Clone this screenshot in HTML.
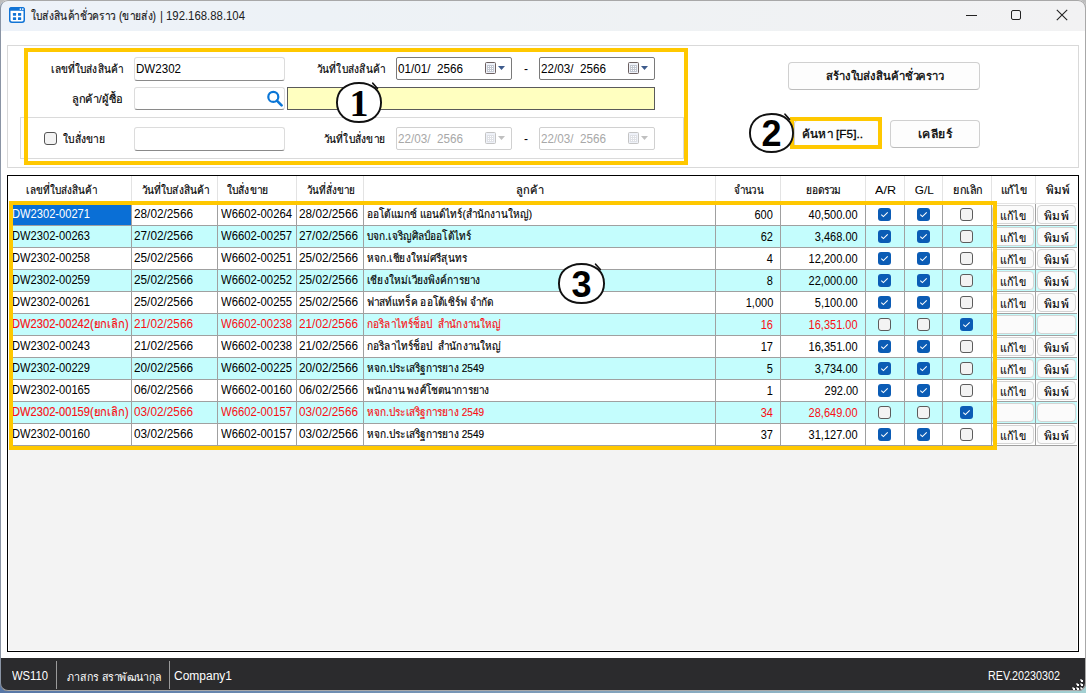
<!DOCTYPE html><html><head><meta charset="utf-8"><style>
*{margin:0;padding:0;box-sizing:border-box}
html,body{width:1086px;height:693px;overflow:hidden;background:linear-gradient(180deg,#bdbdbd 0,#bdbdbd 20px,transparent 20px),linear-gradient(90deg,#5877a6 0%,#7d9bb8 50%,#a3d0d2 100%)}
body{font-family:"Liberation Sans",sans-serif;position:relative;color:#000}
.abs{position:absolute}
svg{display:block}
#win{position:absolute;left:0;top:0;width:1086px;height:691px;background:#fff;border-radius:8px;overflow:hidden}
#frame{position:absolute;left:0;top:0;width:1086px;height:691px;border:1px solid #a8a8a8;border-left-color:#8a94a4;border-radius:8px}
#title{position:absolute;left:0;top:0;width:1086px;height:31px;background:linear-gradient(90deg,#edf2f9 0%,#edf2f6 30%,#eff2f4 60%,#f2f2f3 100%)}
.t{position:absolute;white-space:pre;line-height:16px;height:16px;-webkit-text-stroke:0.15px currentColor}
.inp{position:absolute;background:#fff;border:1px solid #dcdcdc;border-bottom:1px solid #8a8a8a;border-radius:3px}
.date{position:absolute;background:#fff;border:1px solid #7a7a7a;border-radius:2px}
.date.dis{border-color:#d0d0d0}
.date .cal{position:absolute;left:88px;top:4px}
.btn{position:absolute;background:#fdfdfd;border:1px solid #d0d0d0;border-bottom-color:#bcbcbc;border-radius:4px}
.yb{position:absolute;border:4px solid #ffc800}
.circ{position:absolute}
.hl{position:absolute;background:#e3e3e3}
.gl{position:absolute;background:#a0a0a0}
.cb{position:absolute;width:13px;height:13px}
.gb{position:absolute;height:19px;background:#fbfbfb;border:1px solid #d4d4d4;border-radius:4px}
#status{position:absolute;left:0;top:658px;width:1086px;height:33px;background:#2b2b2d}
</style></head><body><div id="win">

<div id="title">
<svg class="abs" style="left:9px;top:7px" width="16" height="16" viewBox="0 0 16 16"><rect x="0.75" y="0.75" width="14.5" height="14.5" rx="2.2" fill="#fff" stroke="#1174d6" stroke-width="1.5"/><path d="M0 3 Q0 0 3 0 L13 0 Q16 0 16 3 L16 3.7 L0 3.7Z" fill="#1174d6"/><circle cx="11.4" cy="2.1" r="0.85" fill="#fff"/><circle cx="13.8" cy="2.1" r="0.85" fill="#fff"/><rect x="3.9" y="6" width="3.2" height="2.8" rx="0.5" fill="#1174d6"/><rect x="9" y="6" width="3.2" height="2.8" rx="0.5" fill="#1174d6"/><rect x="3.9" y="10.2" width="3.2" height="2.8" rx="0.5" fill="#1174d6"/><rect x="9" y="10.2" width="3.2" height="2.8" rx="0.5" fill="#1174d6"/></svg>
<div class="abs" style="left:966px;top:15px;width:11px;height:1px;background:#222"></div>
<div class="abs" style="left:1011px;top:10px;width:10px;height:10px;border:1px solid #222;border-radius:2px"></div>
<svg class="abs" style="left:1056px;top:9px" width="12" height="12" viewBox="0 0 12 12"><path d="M0.8 0.8 L11.2 11.2 M11.2 0.8 L0.8 11.2" stroke="#222" stroke-width="1.1"/></svg>
</div>

<div class="t" id="ttl" style="top:8.17px;font-size:12.5px;color:#1c1c1c;left:31px;transform-origin:0 50%;transform:scaleX(0.8180)">ใบส่งสินค้าชั่วคราว (ขายส่ง)</div>
<div class="t" id="ttl2" style="top:8.17px;font-size:12.5px;color:#1c1c1c;left:160px;transform-origin:0 50%;-webkit-text-stroke:0;transform:scaleX(0.9231)">|</div>
<div class="t" id="ttl3" style="top:8.17px;font-size:12.5px;color:#1c1c1c;left:166px;transform-origin:0 50%;-webkit-text-stroke:0;transform:scaleX(0.9092)">192.168.88.104</div>
<div class="abs" style="left:7px;top:45px;width:1072px;height:123px;border:1px solid #d9d9d9"></div>
<div class="abs" style="left:20px;top:117px;width:664px;height:42px;border:1px solid #dadada"></div>
<div class="inp" style="left:134px;top:57px;width:151px;height:24px"></div>
<div class="inp" style="left:134px;top:87px;width:151px;height:23px"></div>
<svg class="abs" style="left:266px;top:90px" width="17" height="17" viewBox="0 0 17 17"><circle cx="7.3" cy="6.9" r="5" fill="none" stroke="#0b76d6" stroke-width="2.2"/><path d="M10.9 10.6 L15.6 15.3" stroke="#0b76d6" stroke-width="2.6" stroke-linecap="round"/></svg>
<div class="abs" style="left:287px;top:87px;width:368px;height:23px;background:#ffffc0;border:1px solid #5a5a5a"></div>
<div class="date" style="left:396px;top:57px;width:116px;height:23px"><svg class="cal" width="22" height="14" viewBox="0 0 22 14"><rect x="0.5" y="0.5" width="10" height="11" rx="1" fill="#eef1f8" stroke="#6b5f5f"/><rect x="2" y="3" width="7" height="7" fill="#c3c8d2"/><g fill="#fff"><rect x="3" y="4" width="1" height="1"/><rect x="5" y="4" width="1" height="1"/><rect x="7" y="4" width="1" height="1"/><rect x="3" y="6" width="1" height="1"/><rect x="5" y="6" width="1" height="1"/><rect x="7" y="6" width="1" height="1"/><rect x="3" y="8" width="1" height="1"/><rect x="5" y="8" width="1" height="1"/><rect x="7" y="8" width="1" height="1"/></g><path d="M13 4 L20 4 L16.5 8Z" fill="#3d5b8c"/></svg></div>
<div class="date" style="left:539px;top:57px;width:116px;height:23px"><svg class="cal" width="22" height="14" viewBox="0 0 22 14"><rect x="0.5" y="0.5" width="10" height="11" rx="1" fill="#eef1f8" stroke="#6b5f5f"/><rect x="2" y="3" width="7" height="7" fill="#c3c8d2"/><g fill="#fff"><rect x="3" y="4" width="1" height="1"/><rect x="5" y="4" width="1" height="1"/><rect x="7" y="4" width="1" height="1"/><rect x="3" y="6" width="1" height="1"/><rect x="5" y="6" width="1" height="1"/><rect x="7" y="6" width="1" height="1"/><rect x="3" y="8" width="1" height="1"/><rect x="5" y="8" width="1" height="1"/><rect x="7" y="8" width="1" height="1"/></g><path d="M13 4 L20 4 L16.5 8Z" fill="#3d5b8c"/></svg></div>
<div class="abs" style="left:44px;top:132px;width:13px;height:13px;border:1px solid #555;border-radius:3px;background:#f3f3f3"></div>
<div class="inp" style="left:134px;top:127px;width:151px;height:24px"></div>
<div class="date dis" style="left:396px;top:127px;width:116px;height:23px"><svg class="cal" width="22" height="14" viewBox="0 0 22 14"><rect x="0.5" y="0.5" width="10" height="11" rx="1" fill="#eef1f8" stroke="#c4c4c4"/><rect x="2" y="3" width="7" height="7" fill="#dfe1e6"/><g fill="#fff"><rect x="3" y="4" width="1" height="1"/><rect x="5" y="4" width="1" height="1"/><rect x="7" y="4" width="1" height="1"/><rect x="3" y="6" width="1" height="1"/><rect x="5" y="6" width="1" height="1"/><rect x="7" y="6" width="1" height="1"/><rect x="3" y="8" width="1" height="1"/><rect x="5" y="8" width="1" height="1"/><rect x="7" y="8" width="1" height="1"/></g><path d="M13 4 L20 4 L16.5 8Z" fill="#c0c0c0"/></svg></div>
<div class="date dis" style="left:539px;top:127px;width:116px;height:23px"><svg class="cal" width="22" height="14" viewBox="0 0 22 14"><rect x="0.5" y="0.5" width="10" height="11" rx="1" fill="#eef1f8" stroke="#c4c4c4"/><rect x="2" y="3" width="7" height="7" fill="#dfe1e6"/><g fill="#fff"><rect x="3" y="4" width="1" height="1"/><rect x="5" y="4" width="1" height="1"/><rect x="7" y="4" width="1" height="1"/><rect x="3" y="6" width="1" height="1"/><rect x="5" y="6" width="1" height="1"/><rect x="7" y="6" width="1" height="1"/><rect x="3" y="8" width="1" height="1"/><rect x="5" y="8" width="1" height="1"/><rect x="7" y="8" width="1" height="1"/></g><path d="M13 4 L20 4 L16.5 8Z" fill="#c0c0c0"/></svg></div>
<div class="btn" style="left:788px;top:62px;width:192px;height:28px"></div>
<div class="btn" style="left:794px;top:120px;width:86px;height:28px"></div>
<div class="btn" style="left:890px;top:120px;width:90px;height:28px"></div>
<div class="t" id="lab1" style="top:61.02px;font-size:11.5px;left:51px;transform-origin:0 50%;transform:scaleX(0.8780)">เลขที่ใบส่งสินค้า</div>
<div class="t" id="lab2" style="top:91.02px;font-size:11.5px;left:72px;transform-origin:0 50%;transform:scaleX(0.9586)">ลูกค้า/ผู้ซื้อ</div>
<div class="t" id="inp1" style="top:60.67px;font-size:12.5px;left:136px;transform-origin:0 50%;-webkit-text-stroke:0;transform:scaleX(0.9252)">DW2302</div>
<div class="t" id="lab3" style="top:61.02px;font-size:11.5px;left:317px;transform-origin:0 50%;transform:scaleX(0.8831)">วันที่ใบส่งสินค้า</div>
<div class="t" id="d1" style="top:61.17px;font-size:12.5px;left:398px;transform-origin:0 50%;-webkit-text-stroke:0;transform:scaleX(0.9350)">01/01/  2566</div>
<div class="t" id="dash1" style="top:61.17px;font-size:12.5px;left:524px;transform-origin:0 50%;-webkit-text-stroke:0;transform:scaleX(0.9588)">-</div>
<div class="t" id="d2" style="top:61.17px;font-size:12.5px;left:541px;transform-origin:0 50%;-webkit-text-stroke:0;transform:scaleX(0.9350)">22/03/  2566</div>
<div class="t" id="lab4" style="top:131.02px;font-size:11.5px;left:63px;transform-origin:0 50%;transform:scaleX(0.8936)">ใบสั่งขาย</div>
<div class="t" id="lab5" style="top:131.02px;font-size:11.5px;left:324px;transform-origin:0 50%;transform:scaleX(0.8841)">วันที่ใบสั่งขาย</div>
<div class="t" id="d3" style="top:131.17px;font-size:12.5px;color:#a8a8a8;left:398px;transform-origin:0 50%;-webkit-text-stroke:0;transform:scaleX(0.9350)">22/03/  2566</div>
<div class="t" id="dash2" style="top:131.17px;font-size:12.5px;left:524px;transform-origin:0 50%;-webkit-text-stroke:0;transform:scaleX(0.9588)">-</div>
<div class="t" id="d4" style="top:131.17px;font-size:12.5px;color:#a8a8a8;left:541px;transform-origin:0 50%;-webkit-text-stroke:0;transform:scaleX(0.9350)">22/03/  2566</div>
<div class="t" id="b1" style="top:68.02px;font-size:11.5px;left:826px;transform-origin:0 50%;-webkit-text-stroke:0.28px #000;transform:scaleX(0.9833)">สร้างใบส่งสินค้าชั่วคราว</div>
<div class="t" id="b2" style="top:126.02px;font-size:11.5px;left:802px;transform-origin:0 50%;-webkit-text-stroke:0.28px #000;transform:scaleX(1.0268)">ค้นหา [F5]..</div>
<div class="t" id="b3" style="top:126.02px;font-size:11.5px;left:918px;transform-origin:0 50%;-webkit-text-stroke:0.28px #000;transform:scaleX(1.0625)">เคลียร์</div>
<div class="abs" style="left:7px;top:175px;width:1072px;height:477px;border:1px solid #000;background:#fff"></div>
<div class="abs" style="left:9px;top:177px;width:1068px;height:473px;background:#f3f3f3"></div>
<div class="abs" style="left:9px;top:176px;width:1068px;height:27px;background:#fff"></div>
<div class="hl" style="left:131px;top:176px;width:1px;height:27px"></div>
<div class="hl" style="left:217px;top:176px;width:1px;height:27px"></div>
<div class="hl" style="left:296px;top:176px;width:1px;height:27px"></div>
<div class="hl" style="left:363px;top:176px;width:1px;height:27px"></div>
<div class="hl" style="left:715px;top:176px;width:1px;height:27px"></div>
<div class="hl" style="left:780px;top:176px;width:1px;height:27px"></div>
<div class="hl" style="left:865px;top:176px;width:1px;height:27px"></div>
<div class="hl" style="left:904px;top:176px;width:1px;height:27px"></div>
<div class="hl" style="left:942px;top:176px;width:1px;height:27px"></div>
<div class="hl" style="left:991px;top:176px;width:1px;height:27px"></div>
<div class="hl" style="left:1035px;top:176px;width:1px;height:27px"></div>
<div class="hl" style="left:9px;top:203px;width:1068px;height:1px"></div>
<div class="t" style="top:181.52px;font-size:11.5px;left:-238.0px;width:600px;text-align:center;"><span id="h0" style="display:inline-block;transform:scaleX(0.8659)">เลขที่ใบส่งสินค้า</span></div>
<div class="t" style="top:181.52px;font-size:11.5px;left:-124.5px;width:600px;text-align:center;"><span id="h1" style="display:inline-block;transform:scaleX(0.8831)">วันที่ใบส่งสินค้า</span></div>
<div class="t" style="top:181.52px;font-size:11.5px;left:-52.5px;width:600px;text-align:center;"><span id="h2" style="display:inline-block;transform:scaleX(0.8936)">ใบสั่งขาย</span></div>
<div class="t" style="top:181.52px;font-size:11.5px;left:30.5px;width:600px;text-align:center;"><span id="h3" style="display:inline-block;transform:scaleX(0.8571)">วันที่สั่งขาย</span></div>
<div class="t" style="top:181.52px;font-size:11.5px;left:230.0px;width:600px;text-align:center;"><span id="h4" style="display:inline-block;transform:scaleX(0.9643)">ลูกค้า</span></div>
<div class="t" style="top:181.52px;font-size:11.5px;left:448.5px;width:600px;text-align:center;"><span id="h5" style="display:inline-block;transform:scaleX(0.8571)">จำนวน</span></div>
<div class="t" style="top:181.52px;font-size:11.5px;left:523.5px;width:600px;text-align:center;"><span id="h6" style="display:inline-block;transform:scaleX(0.8780)">ยอดรวม</span></div>
<div class="t" style="top:181.52px;font-size:11.5px;left:586.0px;width:600px;text-align:center;-webkit-text-stroke:0;"><span id="h7" style="display:inline-block;transform:scaleX(1.0954)">A/R</span></div>
<div class="t" style="top:181.52px;font-size:11.5px;left:624.0px;width:600px;text-align:center;-webkit-text-stroke:0;"><span id="h8" style="display:inline-block;transform:scaleX(1.0244)">G/L</span></div>
<div class="t" style="top:181.52px;font-size:11.5px;left:667.5px;width:600px;text-align:center;"><span id="h9" style="display:inline-block;transform:scaleX(0.9375)">ยกเลิก</span></div>
<div class="t" style="top:181.52px;font-size:11.5px;left:713.5px;width:600px;text-align:center;"><span id="h10" style="display:inline-block;transform:scaleX(0.9286)">แก้ไข</span></div>
<div class="t" style="top:181.52px;font-size:11.5px;left:757.5px;width:600px;text-align:center;"><span id="h11" style="display:inline-block;transform:scaleX(1.0000)">พิมพ์</span></div>
<div class="abs" style="left:9px;top:204px;width:1068px;height:21px;background:#fff"></div>
<div class="gl" style="left:9px;top:225px;width:1068px;height:1px"></div>
<div class="abs" style="left:9px;top:226px;width:1068px;height:21px;background:#c4fdfd"></div>
<div class="gl" style="left:9px;top:247px;width:1068px;height:1px"></div>
<div class="abs" style="left:9px;top:248px;width:1068px;height:21px;background:#fff"></div>
<div class="gl" style="left:9px;top:269px;width:1068px;height:1px"></div>
<div class="abs" style="left:9px;top:270px;width:1068px;height:21px;background:#c4fdfd"></div>
<div class="gl" style="left:9px;top:291px;width:1068px;height:1px"></div>
<div class="abs" style="left:9px;top:292px;width:1068px;height:21px;background:#fff"></div>
<div class="gl" style="left:9px;top:313px;width:1068px;height:1px"></div>
<div class="abs" style="left:9px;top:314px;width:1068px;height:21px;background:#c4fdfd"></div>
<div class="gl" style="left:9px;top:335px;width:1068px;height:1px"></div>
<div class="abs" style="left:9px;top:336px;width:1068px;height:21px;background:#fff"></div>
<div class="gl" style="left:9px;top:357px;width:1068px;height:1px"></div>
<div class="abs" style="left:9px;top:358px;width:1068px;height:21px;background:#c4fdfd"></div>
<div class="gl" style="left:9px;top:379px;width:1068px;height:1px"></div>
<div class="abs" style="left:9px;top:380px;width:1068px;height:21px;background:#fff"></div>
<div class="gl" style="left:9px;top:401px;width:1068px;height:1px"></div>
<div class="abs" style="left:9px;top:402px;width:1068px;height:21px;background:#c4fdfd"></div>
<div class="gl" style="left:9px;top:423px;width:1068px;height:1px"></div>
<div class="abs" style="left:9px;top:424px;width:1068px;height:21px;background:#fff"></div>
<div class="gl" style="left:9px;top:445px;width:1068px;height:1px"></div>
<div class="gl" style="left:131px;top:204px;width:1px;height:242px"></div>
<div class="gl" style="left:217px;top:204px;width:1px;height:242px"></div>
<div class="gl" style="left:296px;top:204px;width:1px;height:242px"></div>
<div class="gl" style="left:363px;top:204px;width:1px;height:242px"></div>
<div class="gl" style="left:715px;top:204px;width:1px;height:242px"></div>
<div class="gl" style="left:780px;top:204px;width:1px;height:242px"></div>
<div class="gl" style="left:865px;top:204px;width:1px;height:242px"></div>
<div class="gl" style="left:904px;top:204px;width:1px;height:242px"></div>
<div class="gl" style="left:942px;top:204px;width:1px;height:242px"></div>
<div class="gl" style="left:991px;top:204px;width:1px;height:242px"></div>
<div class="gl" style="left:1035px;top:204px;width:1px;height:242px"></div>
<div class="abs" style="left:9px;top:204px;width:122px;height:21px;background:#0a6fd6"></div>
<div class="t" id="r0c0" style="top:205.67px;font-size:12.5px;color:#fff;left:12px;transform-origin:0 50%;-webkit-text-stroke:0;transform:scaleX(0.8908)">DW2302-00271</div>
<div class="t" id="r0c1" style="top:205.67px;font-size:12.5px;color:#000;left:134px;transform-origin:0 50%;-webkit-text-stroke:0;transform:scaleX(0.9431)">28/02/2566</div>
<div class="t" id="r0c2" style="top:205.67px;font-size:12.5px;color:#000;left:221px;transform-origin:0 50%;-webkit-text-stroke:0;transform:scaleX(0.9041)">W6602-00264</div>
<div class="t" id="r0c3" style="top:205.67px;font-size:12.5px;color:#000;left:299px;transform-origin:0 50%;-webkit-text-stroke:0;transform:scaleX(0.9431)">28/02/2566</div>
<div class="t" id="r0c4" style="top:206.02px;font-size:11.5px;color:#000;left:367px;transform-origin:0 50%;transform:scaleX(0.8737)">ออโต้แมกซ์ แอนด์ไทร์(สำนักงานใหญ่)</div>
<div class="t" id="r0c5" style="top:206.67px;font-size:12.5px;color:#000;right:313px;transform-origin:100% 50%;-webkit-text-stroke:0;transform:scaleX(0.8811)">600</div>
<div class="t" id="r0c6" style="top:206.67px;font-size:12.5px;color:#000;right:228px;transform-origin:100% 50%;-webkit-text-stroke:0;transform:scaleX(0.8811)">40,500.00</div>
<div class="cb" style="left:878px;top:208px"><svg width="13" height="13" viewBox="0 0 13 13"><rect x="0" y="0" width="13" height="13" rx="3" fill="#0b5cb5"/><path d="M3.3 6.6 L5.4 8.6 L9.7 4.4" stroke="#fff" stroke-width="1.1" fill="none"/></svg></div>
<div class="cb" style="left:917px;top:208px"><svg width="13" height="13" viewBox="0 0 13 13"><rect x="0" y="0" width="13" height="13" rx="3" fill="#0b5cb5"/><path d="M3.3 6.6 L5.4 8.6 L9.7 4.4" stroke="#fff" stroke-width="1.1" fill="none"/></svg></div>
<div class="cb" style="left:960px;top:208px"><svg width="13" height="13" viewBox="0 0 13 13"><rect x="0.5" y="0.5" width="12" height="12" rx="2.5" fill="#f3f3f3" stroke="#5c5c5c" stroke-width="1"/></svg></div>
<div class="gb" style="left:992px;top:205px;width:42px"></div>
<div class="gb" style="left:1037px;top:205px;width:39px"></div>
<div class="t" id="r0e" style="top:208.02px;font-size:11.5px;left:1000px;transform-origin:0 50%;-webkit-text-stroke:0.08px #000;transform:scaleX(0.9286)">แก้ไข</div>
<div class="t" id="r0p" style="top:207.52px;font-size:11.5px;left:1044px;transform-origin:0 50%;-webkit-text-stroke:0.08px #000;transform:scaleX(1.0417)">พิมพ์</div>
<div class="t" id="r1c0" style="top:227.67px;font-size:12.5px;color:#000;left:12px;transform-origin:0 50%;-webkit-text-stroke:0;transform:scaleX(0.8908)">DW2302-00263</div>
<div class="t" id="r1c1" style="top:227.67px;font-size:12.5px;color:#000;left:134px;transform-origin:0 50%;-webkit-text-stroke:0;transform:scaleX(0.9431)">27/02/2566</div>
<div class="t" id="r1c2" style="top:227.67px;font-size:12.5px;color:#000;left:221px;transform-origin:0 50%;-webkit-text-stroke:0;transform:scaleX(0.9041)">W6602-00257</div>
<div class="t" id="r1c3" style="top:227.67px;font-size:12.5px;color:#000;left:299px;transform-origin:0 50%;-webkit-text-stroke:0;transform:scaleX(0.9431)">27/02/2566</div>
<div class="t" id="r1c4" style="top:228.02px;font-size:11.5px;color:#000;left:367px;transform-origin:0 50%;transform:scaleX(0.8737)">บจก.เจริญศิลป์ออโต้ไทร์</div>
<div class="t" id="r1c5" style="top:228.67px;font-size:12.5px;color:#000;right:313px;transform-origin:100% 50%;-webkit-text-stroke:0;transform:scaleX(0.8811)">62</div>
<div class="t" id="r1c6" style="top:228.67px;font-size:12.5px;color:#000;right:228px;transform-origin:100% 50%;-webkit-text-stroke:0;transform:scaleX(0.8811)">3,468.00</div>
<div class="cb" style="left:878px;top:230px"><svg width="13" height="13" viewBox="0 0 13 13"><rect x="0" y="0" width="13" height="13" rx="3" fill="#0b5cb5"/><path d="M3.3 6.6 L5.4 8.6 L9.7 4.4" stroke="#fff" stroke-width="1.1" fill="none"/></svg></div>
<div class="cb" style="left:917px;top:230px"><svg width="13" height="13" viewBox="0 0 13 13"><rect x="0" y="0" width="13" height="13" rx="3" fill="#0b5cb5"/><path d="M3.3 6.6 L5.4 8.6 L9.7 4.4" stroke="#fff" stroke-width="1.1" fill="none"/></svg></div>
<div class="cb" style="left:960px;top:230px"><svg width="13" height="13" viewBox="0 0 13 13"><rect x="0.5" y="0.5" width="12" height="12" rx="2.5" fill="#f3f3f3" stroke="#5c5c5c" stroke-width="1"/></svg></div>
<div class="gb" style="left:992px;top:227px;width:42px"></div>
<div class="gb" style="left:1037px;top:227px;width:39px"></div>
<div class="t" id="r1e" style="top:230.02px;font-size:11.5px;left:1000px;transform-origin:0 50%;-webkit-text-stroke:0.08px #000;transform:scaleX(0.9286)">แก้ไข</div>
<div class="t" id="r1p" style="top:229.52px;font-size:11.5px;left:1044px;transform-origin:0 50%;-webkit-text-stroke:0.08px #000;transform:scaleX(1.0417)">พิมพ์</div>
<div class="t" id="r2c0" style="top:249.67px;font-size:12.5px;color:#000;left:12px;transform-origin:0 50%;-webkit-text-stroke:0;transform:scaleX(0.8908)">DW2302-00258</div>
<div class="t" id="r2c1" style="top:249.67px;font-size:12.5px;color:#000;left:134px;transform-origin:0 50%;-webkit-text-stroke:0;transform:scaleX(0.9431)">25/02/2566</div>
<div class="t" id="r2c2" style="top:249.67px;font-size:12.5px;color:#000;left:221px;transform-origin:0 50%;-webkit-text-stroke:0;transform:scaleX(0.9041)">W6602-00251</div>
<div class="t" id="r2c3" style="top:249.67px;font-size:12.5px;color:#000;left:299px;transform-origin:0 50%;-webkit-text-stroke:0;transform:scaleX(0.9431)">25/02/2566</div>
<div class="t" id="r2c4" style="top:250.02px;font-size:11.5px;color:#000;left:367px;transform-origin:0 50%;transform:scaleX(0.8737)">หจก.เชียงใหม่ศรีสุนทร</div>
<div class="t" id="r2c5" style="top:250.67px;font-size:12.5px;color:#000;right:313px;transform-origin:100% 50%;-webkit-text-stroke:0;transform:scaleX(0.8811)">4</div>
<div class="t" id="r2c6" style="top:250.67px;font-size:12.5px;color:#000;right:228px;transform-origin:100% 50%;-webkit-text-stroke:0;transform:scaleX(0.8811)">12,200.00</div>
<div class="cb" style="left:878px;top:252px"><svg width="13" height="13" viewBox="0 0 13 13"><rect x="0" y="0" width="13" height="13" rx="3" fill="#0b5cb5"/><path d="M3.3 6.6 L5.4 8.6 L9.7 4.4" stroke="#fff" stroke-width="1.1" fill="none"/></svg></div>
<div class="cb" style="left:917px;top:252px"><svg width="13" height="13" viewBox="0 0 13 13"><rect x="0" y="0" width="13" height="13" rx="3" fill="#0b5cb5"/><path d="M3.3 6.6 L5.4 8.6 L9.7 4.4" stroke="#fff" stroke-width="1.1" fill="none"/></svg></div>
<div class="cb" style="left:960px;top:252px"><svg width="13" height="13" viewBox="0 0 13 13"><rect x="0.5" y="0.5" width="12" height="12" rx="2.5" fill="#f3f3f3" stroke="#5c5c5c" stroke-width="1"/></svg></div>
<div class="gb" style="left:992px;top:249px;width:42px"></div>
<div class="gb" style="left:1037px;top:249px;width:39px"></div>
<div class="t" id="r2e" style="top:252.02px;font-size:11.5px;left:1000px;transform-origin:0 50%;-webkit-text-stroke:0.08px #000;transform:scaleX(0.9286)">แก้ไข</div>
<div class="t" id="r2p" style="top:251.52px;font-size:11.5px;left:1044px;transform-origin:0 50%;-webkit-text-stroke:0.08px #000;transform:scaleX(1.0417)">พิมพ์</div>
<div class="t" id="r3c0" style="top:271.67px;font-size:12.5px;color:#000;left:12px;transform-origin:0 50%;-webkit-text-stroke:0;transform:scaleX(0.8908)">DW2302-00259</div>
<div class="t" id="r3c1" style="top:271.67px;font-size:12.5px;color:#000;left:134px;transform-origin:0 50%;-webkit-text-stroke:0;transform:scaleX(0.9431)">25/02/2566</div>
<div class="t" id="r3c2" style="top:271.67px;font-size:12.5px;color:#000;left:221px;transform-origin:0 50%;-webkit-text-stroke:0;transform:scaleX(0.9041)">W6602-00252</div>
<div class="t" id="r3c3" style="top:271.67px;font-size:12.5px;color:#000;left:299px;transform-origin:0 50%;-webkit-text-stroke:0;transform:scaleX(0.9431)">25/02/2566</div>
<div class="t" id="r3c4" style="top:272.02px;font-size:11.5px;color:#000;left:367px;transform-origin:0 50%;transform:scaleX(0.8737)">เชียงใหม่เวียงพิงค์การยาง</div>
<div class="t" id="r3c5" style="top:272.67px;font-size:12.5px;color:#000;right:313px;transform-origin:100% 50%;-webkit-text-stroke:0;transform:scaleX(0.8811)">8</div>
<div class="t" id="r3c6" style="top:272.67px;font-size:12.5px;color:#000;right:228px;transform-origin:100% 50%;-webkit-text-stroke:0;transform:scaleX(0.8811)">22,000.00</div>
<div class="cb" style="left:878px;top:274px"><svg width="13" height="13" viewBox="0 0 13 13"><rect x="0" y="0" width="13" height="13" rx="3" fill="#0b5cb5"/><path d="M3.3 6.6 L5.4 8.6 L9.7 4.4" stroke="#fff" stroke-width="1.1" fill="none"/></svg></div>
<div class="cb" style="left:917px;top:274px"><svg width="13" height="13" viewBox="0 0 13 13"><rect x="0" y="0" width="13" height="13" rx="3" fill="#0b5cb5"/><path d="M3.3 6.6 L5.4 8.6 L9.7 4.4" stroke="#fff" stroke-width="1.1" fill="none"/></svg></div>
<div class="cb" style="left:960px;top:274px"><svg width="13" height="13" viewBox="0 0 13 13"><rect x="0.5" y="0.5" width="12" height="12" rx="2.5" fill="#f3f3f3" stroke="#5c5c5c" stroke-width="1"/></svg></div>
<div class="gb" style="left:992px;top:271px;width:42px"></div>
<div class="gb" style="left:1037px;top:271px;width:39px"></div>
<div class="t" id="r3e" style="top:274.02px;font-size:11.5px;left:1000px;transform-origin:0 50%;-webkit-text-stroke:0.08px #000;transform:scaleX(0.9286)">แก้ไข</div>
<div class="t" id="r3p" style="top:273.52px;font-size:11.5px;left:1044px;transform-origin:0 50%;-webkit-text-stroke:0.08px #000;transform:scaleX(1.0417)">พิมพ์</div>
<div class="t" id="r4c0" style="top:293.67px;font-size:12.5px;color:#000;left:12px;transform-origin:0 50%;-webkit-text-stroke:0;transform:scaleX(0.8908)">DW2302-00261</div>
<div class="t" id="r4c1" style="top:293.67px;font-size:12.5px;color:#000;left:134px;transform-origin:0 50%;-webkit-text-stroke:0;transform:scaleX(0.9431)">25/02/2566</div>
<div class="t" id="r4c2" style="top:293.67px;font-size:12.5px;color:#000;left:221px;transform-origin:0 50%;-webkit-text-stroke:0;transform:scaleX(0.9041)">W6602-00255</div>
<div class="t" id="r4c3" style="top:293.67px;font-size:12.5px;color:#000;left:299px;transform-origin:0 50%;-webkit-text-stroke:0;transform:scaleX(0.9431)">25/02/2566</div>
<div class="t" id="r4c4" style="top:294.02px;font-size:11.5px;color:#000;left:367px;transform-origin:0 50%;transform:scaleX(0.8737)">ฟาสท์แทร็ค ออโต้เซิร์ฟ จำกัด</div>
<div class="t" id="r4c5" style="top:294.67px;font-size:12.5px;color:#000;right:313px;transform-origin:100% 50%;-webkit-text-stroke:0;transform:scaleX(0.8811)">1,000</div>
<div class="t" id="r4c6" style="top:294.67px;font-size:12.5px;color:#000;right:228px;transform-origin:100% 50%;-webkit-text-stroke:0;transform:scaleX(0.8811)">5,100.00</div>
<div class="cb" style="left:878px;top:296px"><svg width="13" height="13" viewBox="0 0 13 13"><rect x="0" y="0" width="13" height="13" rx="3" fill="#0b5cb5"/><path d="M3.3 6.6 L5.4 8.6 L9.7 4.4" stroke="#fff" stroke-width="1.1" fill="none"/></svg></div>
<div class="cb" style="left:917px;top:296px"><svg width="13" height="13" viewBox="0 0 13 13"><rect x="0" y="0" width="13" height="13" rx="3" fill="#0b5cb5"/><path d="M3.3 6.6 L5.4 8.6 L9.7 4.4" stroke="#fff" stroke-width="1.1" fill="none"/></svg></div>
<div class="cb" style="left:960px;top:296px"><svg width="13" height="13" viewBox="0 0 13 13"><rect x="0.5" y="0.5" width="12" height="12" rx="2.5" fill="#f3f3f3" stroke="#5c5c5c" stroke-width="1"/></svg></div>
<div class="gb" style="left:992px;top:293px;width:42px"></div>
<div class="gb" style="left:1037px;top:293px;width:39px"></div>
<div class="t" id="r4e" style="top:296.02px;font-size:11.5px;left:1000px;transform-origin:0 50%;-webkit-text-stroke:0.08px #000;transform:scaleX(0.9286)">แก้ไข</div>
<div class="t" id="r4p" style="top:295.52px;font-size:11.5px;left:1044px;transform-origin:0 50%;-webkit-text-stroke:0.08px #000;transform:scaleX(1.0417)">พิมพ์</div>
<div class="t" id="r5c0" style="top:315.67px;font-size:12.5px;color:#fa0f14;left:12px;transform-origin:0 50%;transform:scaleX(0.8908)">DW2302-00242(ยกเลิก)</div>
<div class="t" id="r5c1" style="top:315.67px;font-size:12.5px;color:#fa0f14;left:134px;transform-origin:0 50%;-webkit-text-stroke:0;transform:scaleX(0.9431)">21/02/2566</div>
<div class="t" id="r5c2" style="top:315.67px;font-size:12.5px;color:#fa0f14;left:221px;transform-origin:0 50%;-webkit-text-stroke:0;transform:scaleX(0.9041)">W6602-00238</div>
<div class="t" id="r5c3" style="top:315.67px;font-size:12.5px;color:#fa0f14;left:299px;transform-origin:0 50%;-webkit-text-stroke:0;transform:scaleX(0.9431)">21/02/2566</div>
<div class="t" id="r5c4" style="top:316.02px;font-size:11.5px;color:#fa0f14;left:367px;transform-origin:0 50%;transform:scaleX(0.8737)">กอริลาไทร์ช็อป&nbsp; สำนักงานใหญ่</div>
<div class="t" id="r5c5" style="top:316.67px;font-size:12.5px;color:#fa0f14;right:313px;transform-origin:100% 50%;-webkit-text-stroke:0;transform:scaleX(0.8811)">16</div>
<div class="t" id="r5c6" style="top:316.67px;font-size:12.5px;color:#fa0f14;right:228px;transform-origin:100% 50%;-webkit-text-stroke:0;transform:scaleX(0.8811)">16,351.00</div>
<div class="cb" style="left:878px;top:318px"><svg width="13" height="13" viewBox="0 0 13 13"><rect x="0.5" y="0.5" width="12" height="12" rx="2.5" fill="#f3f3f3" stroke="#5c5c5c" stroke-width="1"/></svg></div>
<div class="cb" style="left:917px;top:318px"><svg width="13" height="13" viewBox="0 0 13 13"><rect x="0.5" y="0.5" width="12" height="12" rx="2.5" fill="#f3f3f3" stroke="#5c5c5c" stroke-width="1"/></svg></div>
<div class="cb" style="left:960px;top:318px"><svg width="13" height="13" viewBox="0 0 13 13"><rect x="0" y="0" width="13" height="13" rx="3" fill="#0b5cb5"/><path d="M3.3 6.6 L5.4 8.6 L9.7 4.4" stroke="#fff" stroke-width="1.1" fill="none"/></svg></div>
<div class="gb" style="left:992px;top:315px;width:42px"></div>
<div class="gb" style="left:1037px;top:315px;width:39px"></div>
<div class="t" id="r6c0" style="top:337.67px;font-size:12.5px;color:#000;left:12px;transform-origin:0 50%;-webkit-text-stroke:0;transform:scaleX(0.8908)">DW2302-00243</div>
<div class="t" id="r6c1" style="top:337.67px;font-size:12.5px;color:#000;left:134px;transform-origin:0 50%;-webkit-text-stroke:0;transform:scaleX(0.9431)">21/02/2566</div>
<div class="t" id="r6c2" style="top:337.67px;font-size:12.5px;color:#000;left:221px;transform-origin:0 50%;-webkit-text-stroke:0;transform:scaleX(0.9041)">W6602-00238</div>
<div class="t" id="r6c3" style="top:337.67px;font-size:12.5px;color:#000;left:299px;transform-origin:0 50%;-webkit-text-stroke:0;transform:scaleX(0.9431)">21/02/2566</div>
<div class="t" id="r6c4" style="top:338.02px;font-size:11.5px;color:#000;left:367px;transform-origin:0 50%;transform:scaleX(0.8737)">กอริลาไทร์ช็อป&nbsp; สำนักงานใหญ่</div>
<div class="t" id="r6c5" style="top:338.67px;font-size:12.5px;color:#000;right:313px;transform-origin:100% 50%;-webkit-text-stroke:0;transform:scaleX(0.8811)">17</div>
<div class="t" id="r6c6" style="top:338.67px;font-size:12.5px;color:#000;right:228px;transform-origin:100% 50%;-webkit-text-stroke:0;transform:scaleX(0.8811)">16,351.00</div>
<div class="cb" style="left:878px;top:340px"><svg width="13" height="13" viewBox="0 0 13 13"><rect x="0" y="0" width="13" height="13" rx="3" fill="#0b5cb5"/><path d="M3.3 6.6 L5.4 8.6 L9.7 4.4" stroke="#fff" stroke-width="1.1" fill="none"/></svg></div>
<div class="cb" style="left:917px;top:340px"><svg width="13" height="13" viewBox="0 0 13 13"><rect x="0" y="0" width="13" height="13" rx="3" fill="#0b5cb5"/><path d="M3.3 6.6 L5.4 8.6 L9.7 4.4" stroke="#fff" stroke-width="1.1" fill="none"/></svg></div>
<div class="cb" style="left:960px;top:340px"><svg width="13" height="13" viewBox="0 0 13 13"><rect x="0.5" y="0.5" width="12" height="12" rx="2.5" fill="#f3f3f3" stroke="#5c5c5c" stroke-width="1"/></svg></div>
<div class="gb" style="left:992px;top:337px;width:42px"></div>
<div class="gb" style="left:1037px;top:337px;width:39px"></div>
<div class="t" id="r6e" style="top:340.02px;font-size:11.5px;left:1000px;transform-origin:0 50%;-webkit-text-stroke:0.08px #000;transform:scaleX(0.9286)">แก้ไข</div>
<div class="t" id="r6p" style="top:339.52px;font-size:11.5px;left:1044px;transform-origin:0 50%;-webkit-text-stroke:0.08px #000;transform:scaleX(1.0417)">พิมพ์</div>
<div class="t" id="r7c0" style="top:359.67px;font-size:12.5px;color:#000;left:12px;transform-origin:0 50%;-webkit-text-stroke:0;transform:scaleX(0.8908)">DW2302-00229</div>
<div class="t" id="r7c1" style="top:359.67px;font-size:12.5px;color:#000;left:134px;transform-origin:0 50%;-webkit-text-stroke:0;transform:scaleX(0.9431)">20/02/2566</div>
<div class="t" id="r7c2" style="top:359.67px;font-size:12.5px;color:#000;left:221px;transform-origin:0 50%;-webkit-text-stroke:0;transform:scaleX(0.9041)">W6602-00225</div>
<div class="t" id="r7c3" style="top:359.67px;font-size:12.5px;color:#000;left:299px;transform-origin:0 50%;-webkit-text-stroke:0;transform:scaleX(0.9431)">20/02/2566</div>
<div class="t" id="r7c4" style="top:360.02px;font-size:11.5px;color:#000;left:367px;transform-origin:0 50%;transform:scaleX(0.8737)">หจก.ประเสริฐการยาง 2549</div>
<div class="t" id="r7c5" style="top:360.67px;font-size:12.5px;color:#000;right:313px;transform-origin:100% 50%;-webkit-text-stroke:0;transform:scaleX(0.8811)">5</div>
<div class="t" id="r7c6" style="top:360.67px;font-size:12.5px;color:#000;right:228px;transform-origin:100% 50%;-webkit-text-stroke:0;transform:scaleX(0.8811)">3,734.00</div>
<div class="cb" style="left:878px;top:362px"><svg width="13" height="13" viewBox="0 0 13 13"><rect x="0" y="0" width="13" height="13" rx="3" fill="#0b5cb5"/><path d="M3.3 6.6 L5.4 8.6 L9.7 4.4" stroke="#fff" stroke-width="1.1" fill="none"/></svg></div>
<div class="cb" style="left:917px;top:362px"><svg width="13" height="13" viewBox="0 0 13 13"><rect x="0" y="0" width="13" height="13" rx="3" fill="#0b5cb5"/><path d="M3.3 6.6 L5.4 8.6 L9.7 4.4" stroke="#fff" stroke-width="1.1" fill="none"/></svg></div>
<div class="cb" style="left:960px;top:362px"><svg width="13" height="13" viewBox="0 0 13 13"><rect x="0.5" y="0.5" width="12" height="12" rx="2.5" fill="#f3f3f3" stroke="#5c5c5c" stroke-width="1"/></svg></div>
<div class="gb" style="left:992px;top:359px;width:42px"></div>
<div class="gb" style="left:1037px;top:359px;width:39px"></div>
<div class="t" id="r7e" style="top:362.02px;font-size:11.5px;left:1000px;transform-origin:0 50%;-webkit-text-stroke:0.08px #000;transform:scaleX(0.9286)">แก้ไข</div>
<div class="t" id="r7p" style="top:361.52px;font-size:11.5px;left:1044px;transform-origin:0 50%;-webkit-text-stroke:0.08px #000;transform:scaleX(1.0417)">พิมพ์</div>
<div class="t" id="r8c0" style="top:381.67px;font-size:12.5px;color:#000;left:12px;transform-origin:0 50%;-webkit-text-stroke:0;transform:scaleX(0.8908)">DW2302-00165</div>
<div class="t" id="r8c1" style="top:381.67px;font-size:12.5px;color:#000;left:134px;transform-origin:0 50%;-webkit-text-stroke:0;transform:scaleX(0.9431)">06/02/2566</div>
<div class="t" id="r8c2" style="top:381.67px;font-size:12.5px;color:#000;left:221px;transform-origin:0 50%;-webkit-text-stroke:0;transform:scaleX(0.9041)">W6602-00160</div>
<div class="t" id="r8c3" style="top:381.67px;font-size:12.5px;color:#000;left:299px;transform-origin:0 50%;-webkit-text-stroke:0;transform:scaleX(0.9431)">06/02/2566</div>
<div class="t" id="r8c4" style="top:382.02px;font-size:11.5px;color:#000;left:367px;transform-origin:0 50%;transform:scaleX(0.8737)">พนักงาน พงศ์โชตนาการยาง</div>
<div class="t" id="r8c5" style="top:382.67px;font-size:12.5px;color:#000;right:313px;transform-origin:100% 50%;-webkit-text-stroke:0;transform:scaleX(0.8811)">1</div>
<div class="t" id="r8c6" style="top:382.67px;font-size:12.5px;color:#000;right:228px;transform-origin:100% 50%;-webkit-text-stroke:0;transform:scaleX(0.8811)">292.00</div>
<div class="cb" style="left:878px;top:384px"><svg width="13" height="13" viewBox="0 0 13 13"><rect x="0" y="0" width="13" height="13" rx="3" fill="#0b5cb5"/><path d="M3.3 6.6 L5.4 8.6 L9.7 4.4" stroke="#fff" stroke-width="1.1" fill="none"/></svg></div>
<div class="cb" style="left:917px;top:384px"><svg width="13" height="13" viewBox="0 0 13 13"><rect x="0" y="0" width="13" height="13" rx="3" fill="#0b5cb5"/><path d="M3.3 6.6 L5.4 8.6 L9.7 4.4" stroke="#fff" stroke-width="1.1" fill="none"/></svg></div>
<div class="cb" style="left:960px;top:384px"><svg width="13" height="13" viewBox="0 0 13 13"><rect x="0.5" y="0.5" width="12" height="12" rx="2.5" fill="#f3f3f3" stroke="#5c5c5c" stroke-width="1"/></svg></div>
<div class="gb" style="left:992px;top:381px;width:42px"></div>
<div class="gb" style="left:1037px;top:381px;width:39px"></div>
<div class="t" id="r8e" style="top:384.02px;font-size:11.5px;left:1000px;transform-origin:0 50%;-webkit-text-stroke:0.08px #000;transform:scaleX(0.9286)">แก้ไข</div>
<div class="t" id="r8p" style="top:383.52px;font-size:11.5px;left:1044px;transform-origin:0 50%;-webkit-text-stroke:0.08px #000;transform:scaleX(1.0417)">พิมพ์</div>
<div class="t" id="r9c0" style="top:403.67px;font-size:12.5px;color:#fa0f14;left:12px;transform-origin:0 50%;transform:scaleX(0.8908)">DW2302-00159(ยกเลิก)</div>
<div class="t" id="r9c1" style="top:403.67px;font-size:12.5px;color:#fa0f14;left:134px;transform-origin:0 50%;-webkit-text-stroke:0;transform:scaleX(0.9431)">03/02/2566</div>
<div class="t" id="r9c2" style="top:403.67px;font-size:12.5px;color:#fa0f14;left:221px;transform-origin:0 50%;-webkit-text-stroke:0;transform:scaleX(0.9041)">W6602-00157</div>
<div class="t" id="r9c3" style="top:403.67px;font-size:12.5px;color:#fa0f14;left:299px;transform-origin:0 50%;-webkit-text-stroke:0;transform:scaleX(0.9431)">03/02/2566</div>
<div class="t" id="r9c4" style="top:404.02px;font-size:11.5px;color:#fa0f14;left:367px;transform-origin:0 50%;transform:scaleX(0.8737)">หจก.ประเสริฐการยาง 2549</div>
<div class="t" id="r9c5" style="top:404.67px;font-size:12.5px;color:#fa0f14;right:313px;transform-origin:100% 50%;-webkit-text-stroke:0;transform:scaleX(0.8811)">34</div>
<div class="t" id="r9c6" style="top:404.67px;font-size:12.5px;color:#fa0f14;right:228px;transform-origin:100% 50%;-webkit-text-stroke:0;transform:scaleX(0.8811)">28,649.00</div>
<div class="cb" style="left:878px;top:406px"><svg width="13" height="13" viewBox="0 0 13 13"><rect x="0.5" y="0.5" width="12" height="12" rx="2.5" fill="#f3f3f3" stroke="#5c5c5c" stroke-width="1"/></svg></div>
<div class="cb" style="left:917px;top:406px"><svg width="13" height="13" viewBox="0 0 13 13"><rect x="0.5" y="0.5" width="12" height="12" rx="2.5" fill="#f3f3f3" stroke="#5c5c5c" stroke-width="1"/></svg></div>
<div class="cb" style="left:960px;top:406px"><svg width="13" height="13" viewBox="0 0 13 13"><rect x="0" y="0" width="13" height="13" rx="3" fill="#0b5cb5"/><path d="M3.3 6.6 L5.4 8.6 L9.7 4.4" stroke="#fff" stroke-width="1.1" fill="none"/></svg></div>
<div class="gb" style="left:992px;top:403px;width:42px"></div>
<div class="gb" style="left:1037px;top:403px;width:39px"></div>
<div class="t" id="r10c0" style="top:425.67px;font-size:12.5px;color:#000;left:12px;transform-origin:0 50%;-webkit-text-stroke:0;transform:scaleX(0.8908)">DW2302-00160</div>
<div class="t" id="r10c1" style="top:425.67px;font-size:12.5px;color:#000;left:134px;transform-origin:0 50%;-webkit-text-stroke:0;transform:scaleX(0.9431)">03/02/2566</div>
<div class="t" id="r10c2" style="top:425.67px;font-size:12.5px;color:#000;left:221px;transform-origin:0 50%;-webkit-text-stroke:0;transform:scaleX(0.9041)">W6602-00157</div>
<div class="t" id="r10c3" style="top:425.67px;font-size:12.5px;color:#000;left:299px;transform-origin:0 50%;-webkit-text-stroke:0;transform:scaleX(0.9431)">03/02/2566</div>
<div class="t" id="r10c4" style="top:426.02px;font-size:11.5px;color:#000;left:367px;transform-origin:0 50%;transform:scaleX(0.8737)">หจก.ประเสริฐการยาง 2549</div>
<div class="t" id="r10c5" style="top:426.67px;font-size:12.5px;color:#000;right:313px;transform-origin:100% 50%;-webkit-text-stroke:0;transform:scaleX(0.8811)">37</div>
<div class="t" id="r10c6" style="top:426.67px;font-size:12.5px;color:#000;right:228px;transform-origin:100% 50%;-webkit-text-stroke:0;transform:scaleX(0.8811)">31,127.00</div>
<div class="cb" style="left:878px;top:428px"><svg width="13" height="13" viewBox="0 0 13 13"><rect x="0" y="0" width="13" height="13" rx="3" fill="#0b5cb5"/><path d="M3.3 6.6 L5.4 8.6 L9.7 4.4" stroke="#fff" stroke-width="1.1" fill="none"/></svg></div>
<div class="cb" style="left:917px;top:428px"><svg width="13" height="13" viewBox="0 0 13 13"><rect x="0" y="0" width="13" height="13" rx="3" fill="#0b5cb5"/><path d="M3.3 6.6 L5.4 8.6 L9.7 4.4" stroke="#fff" stroke-width="1.1" fill="none"/></svg></div>
<div class="cb" style="left:960px;top:428px"><svg width="13" height="13" viewBox="0 0 13 13"><rect x="0.5" y="0.5" width="12" height="12" rx="2.5" fill="#f3f3f3" stroke="#5c5c5c" stroke-width="1"/></svg></div>
<div class="gb" style="left:992px;top:425px;width:42px"></div>
<div class="gb" style="left:1037px;top:425px;width:39px"></div>
<div class="t" id="r10e" style="top:428.02px;font-size:11.5px;left:1000px;transform-origin:0 50%;-webkit-text-stroke:0.08px #000;transform:scaleX(0.9286)">แก้ไข</div>
<div class="t" id="r10p" style="top:427.52px;font-size:11.5px;left:1044px;transform-origin:0 50%;-webkit-text-stroke:0.08px #000;transform:scaleX(1.0417)">พิมพ์</div>
<div class="yb" style="left:24px;top:48px;width:664px;height:117px"></div>
<div class="yb" style="left:790px;top:117px;width:92px;height:32px"></div>
<div class="yb" style="left:9px;top:201px;width:988px;height:249px"></div>
<svg class="abs" style="left:334px;top:80px" width="50" height="45" viewBox="-2 -2 50 45">
<path d="M23.00 0.95 C36.23 0.95 45.05 8.77 45.05 20.50 C45.05 32.23 36.23 40.05 23.00 40.05 C9.77 40.05 0.95 32.23 0.95 20.50 C0.95 8.77 9.77 0.95 23.00 0.95Z" fill="#fff" stroke="#111" stroke-width="1.9"/>
<path d="M36.80 1.23 L41.40 6.56" stroke="#111" stroke-width="1.7" stroke-linecap="round"/>
<text x="23.0" y="33.5" text-anchor="middle" font-family="Liberation Serif" font-weight="bold" font-size="38">1</text></svg>
<svg class="abs" style="left:747px;top:111px" width="49" height="44" viewBox="-2 -2 49 44">
<path d="M22.50 0.95 C35.43 0.95 44.05 8.57 44.05 20.00 C44.05 31.43 35.43 39.05 22.50 39.05 C9.57 39.05 0.95 31.43 0.95 20.00 C0.95 8.57 9.57 0.95 22.50 0.95Z" fill="#fff" stroke="#111" stroke-width="1.9"/>
<path d="M36.00 1.20 L40.50 6.40" stroke="#111" stroke-width="1.7" stroke-linecap="round"/>
<text x="22.5" y="33" text-anchor="middle" font-family="Liberation Sans" font-weight="bold" font-size="36">2</text></svg>
<svg class="abs" style="left:556px;top:261px" width="51" height="45" viewBox="-2 -2 51 45">
<path d="M23.50 0.95 C37.03 0.95 46.05 8.77 46.05 20.50 C46.05 32.23 37.03 40.05 23.50 40.05 C9.97 40.05 0.95 32.23 0.95 20.50 C0.95 8.77 9.97 0.95 23.50 0.95Z" fill="#fff" stroke="#111" stroke-width="1.9"/>
<path d="M37.60 1.23 L42.30 6.56" stroke="#111" stroke-width="1.7" stroke-linecap="round"/>
<text x="23.5" y="33.5" text-anchor="middle" font-family="Liberation Sans" font-weight="bold" font-size="36">3</text></svg>
<div id="status"></div>
<div class="abs" style="left:0;top:0;width:1px;height:691px;background:linear-gradient(180deg,#b4b4b4 0%,#a8a8a8 28%,#5d6b80 34%,#56709a 100%)"></div>
<div class="abs" style="left:1085px;top:0;width:1px;height:691px;background:linear-gradient(180deg,#b0b0b0 0%,#a8a8a8 30%,#5d6b80 31%,#66788f 90%,#b8b8b8 100%)"></div>
<div class="t" id="s1" style="top:668.17px;font-size:12.5px;color:#fff;left:12px;transform-origin:0 50%;-webkit-text-stroke:0;transform:scaleX(0.8982)">WS110</div>
<div class="abs" style="left:56px;top:661px;width:1px;height:28px;background:#9a9a9a"></div>
<div class="t" id="s2" style="top:668.52px;font-size:11.5px;color:#fff;left:67px;transform-origin:0 50%;-webkit-text-stroke:0;transform:scaleX(0.9295)">ภาสกร สราพัฒนากุล</div>
<div class="abs" style="left:169px;top:661px;width:1px;height:28px;background:#9a9a9a"></div>
<div class="t" id="s3" style="top:668.17px;font-size:12.5px;color:#fff;left:174px;transform-origin:0 50%;-webkit-text-stroke:0;transform:scaleX(0.9594)">Company1</div>
<div class="t" id="s4" style="top:668.17px;font-size:12.5px;color:#fff;left:988px;transform-origin:0 50%;-webkit-text-stroke:0;transform:scaleX(0.8607)">REV.20230302</div>
<svg class="abs" style="left:1071px;top:678px" width="14" height="14"><g fill="#9a9a9a"><rect x="9" y="1" width="2" height="2"/><rect x="5" y="5" width="2" height="2"/><rect x="9" y="5" width="2" height="2"/><rect x="1" y="9" width="2" height="2"/><rect x="5" y="9" width="2" height="2"/><rect x="9" y="9" width="2" height="2"/></g><g fill="#fff"><rect x="10" y="2" width="2" height="2"/><rect x="6" y="6" width="2" height="2"/><rect x="10" y="6" width="2" height="2"/><rect x="2" y="10" width="2" height="2"/><rect x="6" y="10" width="2" height="2"/><rect x="10" y="10" width="2" height="2"/></g></svg>
</div><div id="frame"></div></body></html>
